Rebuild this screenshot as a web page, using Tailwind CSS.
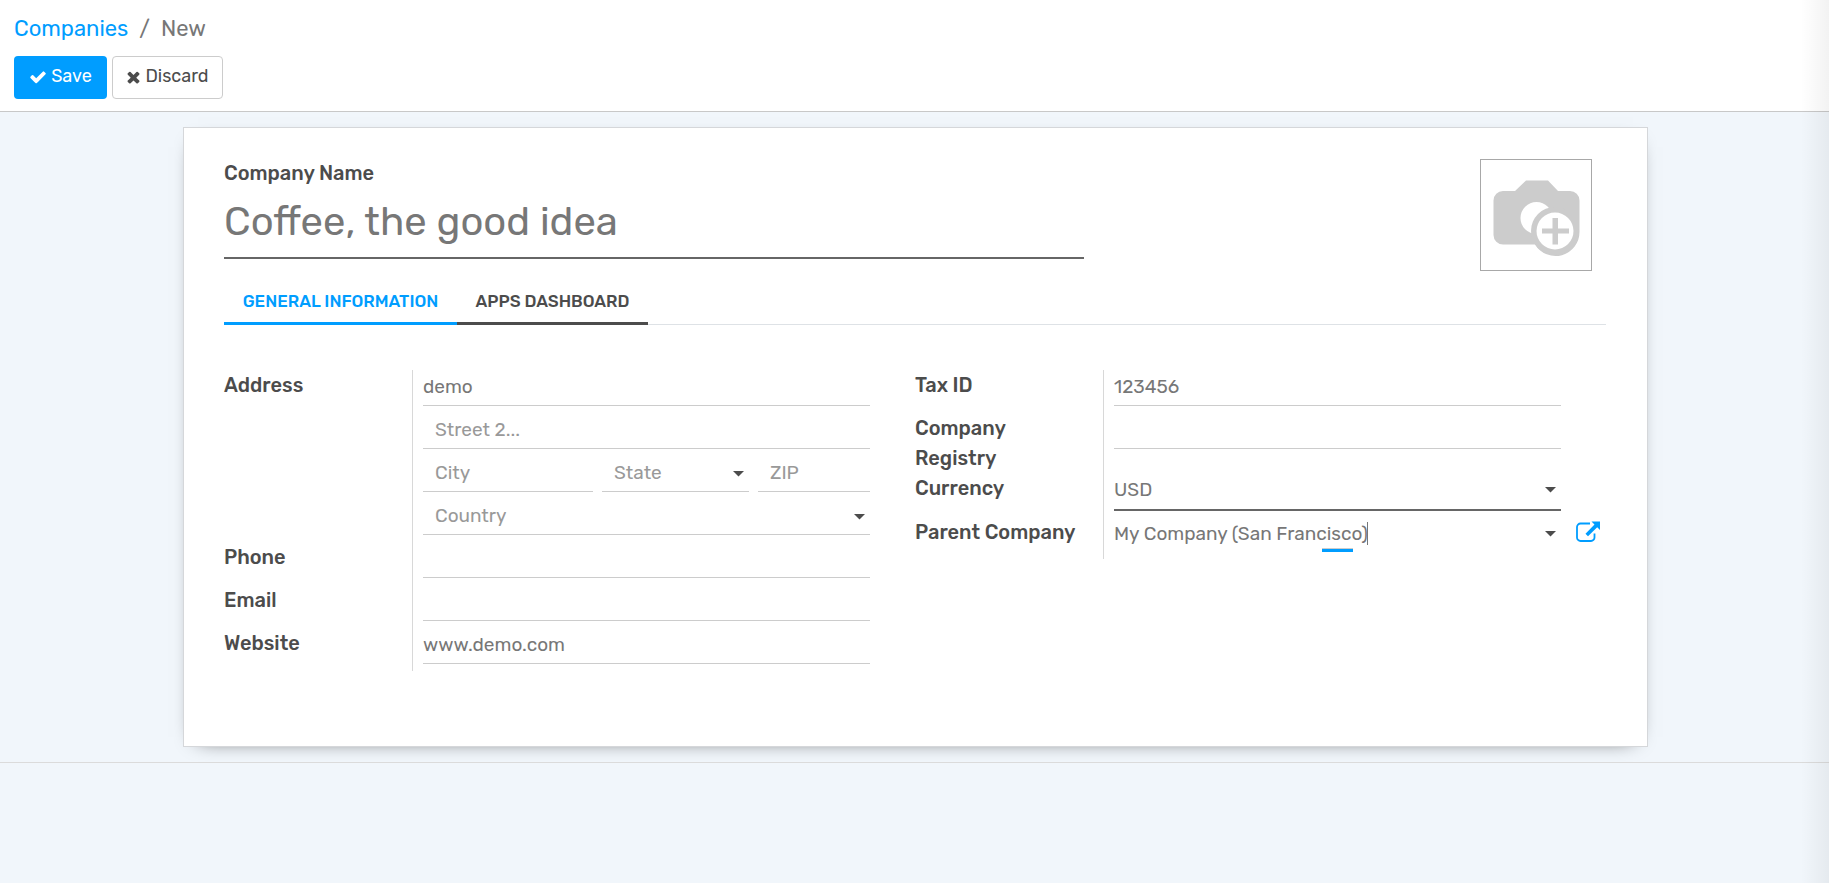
<!DOCTYPE html>
<html lang="en">
<head>
<meta charset="utf-8">
<title>Companies / New</title>
<script src="https://cdn.jsdelivr.net/npm/@tailwindcss/browser@4"></script>
</head>
<body class="min-h-screen bg-[#f1f6fb] font-['Rubik','Roboto',sans-serif] text-[19px] text-[#777] relative">
<header class="bg-white border-b border-[#c8c8c8] px-[14px] pt-[13px] pb-3">
  <nav class="flex gap-[11px] text-[22px] leading-8" aria-label="Breadcrumb">
    <a href="#" class="text-[#009dff]">Companies</a><span>/</span><span>New</span>
  </nav>
  <div class="flex gap-[5px] mt-[11px] text-[18px]">
    <button class="h-[43px] w-[93px] rounded bg-[#009dff] text-white flex items-center justify-center gap-1 pb-[2px]">
      <svg class="w-[18px] h-[18px]" viewBox="0 0 1792 1792" fill="currentColor"><path d="M1671 566q0 40-28 68l-724 724-136 136q-28 28-68 28t-68-28l-136-136-362-362q-28-28-28-68t28-68l136-136q28-28 68-28t68 28l294 295 656-657q28-28 68-28t68 28l136 136q28 28 28 68z"/></svg>Save</button>
    <button class="h-[43px] w-[111px] rounded border border-[#ccc] bg-white text-[#4c4c4c] flex items-center justify-center gap-1 pb-[2px]">
      <svg class="w-[15px] h-[18px]" viewBox="150 0 1492 1792" fill="currentColor"><path d="M1490 1322q0 40-28 68l-136 136q-28 28-68 28t-68-28l-294-294-294 294q-28 28-68 28t-68-28l-136-136q-28-28-28-68t28-68l294-294-294-294q-28-28-28-68t28-68l136-136q28-28 68-28t68 28l294 294 294-294q28-28 68-28t68 28l136 136q28 28 28 68t-28 68l-294 294 294 294q28 28 28 68z"/></svg>Discard</button>
  </div>
</header>
<main class="border-b border-[#dbdbdb] py-[15px] pl-[183px] pr-[181px] overflow-hidden">
  <form class="bg-white border border-[#d5d7da] pt-[31px] pb-[75px] pl-10 pr-[41px] shadow-[0_5px_20px_-15px_#000]">
    <div class="flex justify-between items-start">
      <div class="w-[860px]">
        <label for="name" class="block text-[20px] leading-7 font-medium text-[#4c4c4c]">Company Name</label>
        <input id="name" value="Coffee, the good idea" class="block w-full h-[72px] pb-[2px] text-[40px] border-b-2 border-[#666] outline-none">
      </div>
      <button type="button" aria-label="Add logo" class="mr-[14px] w-28 h-28 border border-[#a8a8a8] flex items-center justify-center">
        <svg class="w-[110px] h-[110px]" viewBox="0 0 110 110"><path fill="#ccc" d="M22 31h12L45 20.500h22L77 31h12a9.500 9.500 0 0 1 9.500 9.500V72A24 24 0 0 1 54 84.500H22a9.500 9.500 0 0 1-9.500-9.500V40.500A9.500 9.500 0 0 1 22 31z"/><circle cx="55.500" cy="58" r="16" fill="#fff"/><circle cx="74" cy="71" r="24" fill="#ccc"/><circle cx="74" cy="71" r="18.500" fill="#fff"/><path fill="#ccc" d="M71.500 58h5.500v10.500h11v5h-11v11h-5.500v-11h-10.500v-5h10.500z"/></svg>
      </button>
    </div>
    <div role="tablist" class="mt-[14px] flex border-b border-[#dee2e6] text-[17px] font-medium">
      <button type="button" role="tab" aria-selected="true" class="w-[233px] h-10 pb-1 -mb-px border-b-3 border-[#009dff] text-[#009dff]">GENERAL INFORMATION</button>
      <button type="button" role="tab" aria-selected="false" class="w-[191px] h-10 pb-1 -mb-px border-b-3 border-[#4c4c4c] text-[#4c4c4c]">APPS DASHBOARD</button>
    </div>
    <div class="mt-[45px] grid grid-cols-2 items-start">
      <div class="grid grid-cols-[188px_1fr] pr-[45px]">
        <div class="row-span-4 text-[20px] leading-[30px] font-medium text-[#4c4c4c]"><label for="street">Address</label></div>
        <div class="border-l border-[#d8d8d8] pl-[10px] h-[43px]"><input id="street" value="demo" class="block w-full h-9 pb-[2px] border-b border-[#ccc] outline-none"></div>
        <div class="border-l border-[#d8d8d8] pl-[10px] h-[43px]"><input aria-label="Street 2" placeholder="Street 2..." class="block w-full h-9 px-3 pb-[2px] border-b border-[#ccc] outline-none placeholder:text-[#999]"></div>
        <div class="border-l border-[#d8d8d8] pl-[10px] h-[43px] grid grid-cols-[170fr_147fr_112fr] gap-[9px]">
          <input aria-label="City" placeholder="City" class="block w-full min-w-0 h-9 px-3 pb-[2px] border-b border-[#ccc] outline-none placeholder:text-[#999]">
          <div class="h-9 flex items-center border-b border-[#ccc] pr-[5px]"><select aria-label="State" class="appearance-none grow min-w-0 px-3 text-[#999] outline-none"><option>State</option></select><svg class="w-[11px] h-[6px]" viewBox="0 0 11 6"><path fill="#4c4c4c" d="M0 0h11L5.500 5.500z"/></svg></div>
          <input aria-label="ZIP" placeholder="ZIP" class="block w-full min-w-0 h-9 px-3 pb-[2px] border-b border-[#ccc] outline-none placeholder:text-[#999]">
        </div>
        <div class="border-l border-[#d8d8d8] pl-[10px] h-[43px]"><div class="h-9 flex items-center border-b border-[#ccc] pr-[5px]"><select aria-label="Country" class="appearance-none grow min-w-0 px-3 text-[#999] outline-none"><option>Country</option></select><svg class="w-[11px] h-[6px]" viewBox="0 0 11 6"><path fill="#4c4c4c" d="M0 0h11L5.500 5.500z"/></svg></div></div>
        <label for="phone" class="text-[20px] leading-[30px] font-medium text-[#4c4c4c]">Phone</label>
        <div class="border-l border-[#d8d8d8] pl-[10px] h-[43px]"><input id="phone" class="block w-full h-9 pb-[2px] border-b border-[#ccc] outline-none"></div>
        <label for="email" class="text-[20px] leading-[30px] font-medium text-[#4c4c4c]">Email</label>
        <div class="border-l border-[#d8d8d8] pl-[10px] h-[43px]"><input id="email" class="block w-full h-9 pb-[2px] border-b border-[#ccc] outline-none"></div>
        <label for="website" class="text-[20px] leading-[30px] font-medium text-[#4c4c4c]">Website</label>
        <div class="border-l border-[#d8d8d8] pl-[10px] h-[43px]"><input id="website" value="www.demo.com" class="block w-full h-9 pb-[2px] border-b border-[#ccc] outline-none"></div>
      </div>
      <div class="grid grid-cols-[188px_1fr]">
        <label for="tax" class="text-[20px] leading-[30px] font-medium text-[#4c4c4c]">Tax ID</label>
        <div class="border-l border-[#d8d8d8] pl-[10px] pr-[45px] h-[43px]"><input id="tax" value="123456" class="block w-full h-9 pb-[2px] border-b border-[#ccc] outline-none"></div>
        <label for="registry" class="pr-10 text-[20px] leading-[30px] font-medium text-[#4c4c4c]">Company Registry</label>
        <div class="border-l border-[#d8d8d8] pl-[10px] pr-[45px] h-[60px]"><input id="registry" class="block w-full h-9 pb-[2px] border-b border-[#ccc] outline-none"></div>
        <label for="currency" class="text-[20px] leading-[30px] font-medium text-[#4c4c4c]">Currency</label>
        <div class="border-l border-[#d8d8d8] pl-[10px] pr-[45px] h-11"><div class="h-[38px] flex items-center border-b-2 border-[#666] pr-[5px] pb-[2px]"><select id="currency" class="appearance-none grow min-w-0 pt-px outline-none"><option>USD</option></select><svg class="w-[11px] h-[6px]" viewBox="0 0 11 6"><path fill="#4c4c4c" d="M0 0h11L5.500 5.500z"/></svg></div></div>
        <label for="parent" class="text-[20px] leading-[30px] font-medium text-[#4c4c4c]">Parent Company</label>
        <div class="border-l border-[#d8d8d8] pl-[10px] pr-[6px] h-[42px] flex items-start">
          <div class="relative grow h-[34px] flex items-center pr-[5px]">
            <input id="parent" role="combobox" aria-expanded="false" value="My Company (San Francisco)" class="grow min-w-0 outline-none"><svg class="w-[11px] h-[6px]" viewBox="0 0 11 6"><path fill="#4c4c4c" d="M0 0h11L5.500 5.500z"/></svg>
            <span class="absolute left-[253px] top-[5px] w-px h-[23px] bg-[#777]"></span>
            <span class="absolute left-[208px] top-[31px] w-[31px] h-1 border-t border-[#ccc] bg-[#009dff]"></span>
          </div>
          <button type="button" aria-label="External link" class="ml-[15px] mt-1 text-[#009dff]"><svg class="block w-6 h-[22px]" viewBox="0 0 24 22" fill="none"><path d="M14 2.500H4.500A3.500 3.500 0 0 0 1 6v10.500A3.500 3.500 0 0 0 4.500 20h10.500A3.500 3.500 0 0 0 18.500 16.500V12.500" stroke="currentColor" stroke-width="1.800"/><path fill="currentColor" d="M15.500 0.500H24V9l-2.800-2.800L12 15.200 9.500 12.700l9-9.200z"/></svg></button>
        </div>
      </div>
    </div>
  </form>
</main>
<div class="absolute right-0 top-0 h-full w-7 bg-linear-to-r from-transparent to-black/5 pointer-events-none"></div>
</body>
</html>
